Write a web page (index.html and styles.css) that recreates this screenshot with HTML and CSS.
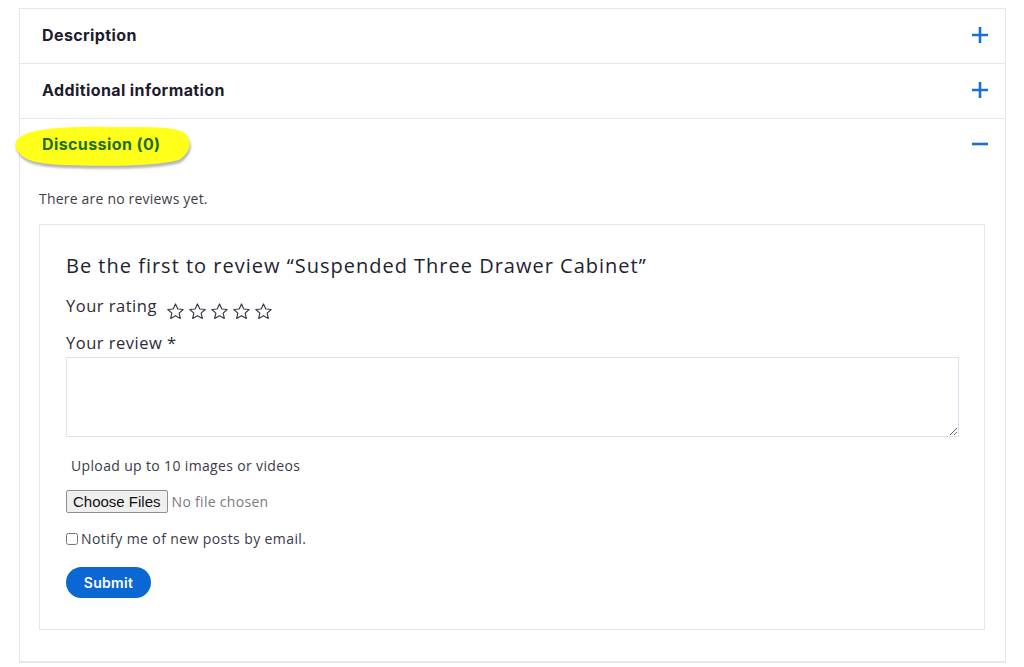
FILE: index.html
```html
<!DOCTYPE html>
<html>
<head>
<meta charset="utf-8">
<link rel="stylesheet" href="styles.css">
</head>
<body>
<div class="accordion">
  <div class="acc-item">
    <div class="acc-head">
      <span class="acc-title">Description</span>
      <svg class="acc-icon" width="18" height="18" viewBox="0 0 18 18"><path d="M1 9h16M9 1v16" stroke="#1a6fd6" stroke-width="2.6" fill="none"/></svg>
    </div>
  </div>
  <div class="acc-item">
    <div class="acc-head">
      <span class="acc-title">Additional information</span>
      <svg class="acc-icon" width="18" height="18" viewBox="0 0 18 18"><path d="M1 9h16M9 1v16" stroke="#1a6fd6" stroke-width="2.6" fill="none"/></svg>
    </div>
  </div>
  <div class="acc-item open">
    <div class="acc-head active">
      <svg class="highlight" width="182" height="46" viewBox="0 0 182 46">
        <defs>
          <filter id="sh" x="-10%" y="-20%" width="120%" height="150%">
            <feGaussianBlur stdDeviation="1.3"/>
          </filter>
        </defs>
        <path d="M6 14 C16 5 50 2 95 3 C135 3 165 2 173 10 C180 18 177 29 166 36 C140 43 90 42 50 41 C28 40 12 37 6 29 C1 23 1 18 6 14 Z" fill="#7a7a7a" opacity="0.55" filter="url(#sh)" transform="translate(1,2)"/>
        <path d="M6 13 C16 4 50 1 95 2 C135 2 165 1 173 9 C180 17 177 28 166 35 C140 42 90 41 50 40 C28 39 12 36 6 28 C1 22 1 17 6 13 Z" fill="#ffff1a"/>
      </svg>
      <span class="acc-title green">Discussion (0)</span>
      <svg class="acc-icon" width="18" height="18" viewBox="0 0 18 18"><path d="M1 9h16" stroke="#1a6fd6" stroke-width="2.6" fill="none"/></svg>
    </div>
    <div class="acc-panel">
      <p class="no-reviews">There are no reviews yet.</p>
      <div class="review-box">
        <h3 class="review-title">Be the first to review “Suspended Three Drawer Cabinet”</h3>
        <div class="rating-row">
          <span class="label">Your rating</span>
          <span class="stars">
            <svg width="19" height="19" viewBox="0 0 24 24"><path d="M12 2.5l2.9 6.3 6.8.7-5.1 4.6 1.5 6.7L12 17.3l-6.1 3.5 1.5-6.7-5.1-4.6 6.8-.7z" fill="none" stroke="#3b3b45" stroke-width="1.5" stroke-linejoin="round"/></svg>
            <svg width="19" height="19" viewBox="0 0 24 24"><path d="M12 2.5l2.9 6.3 6.8.7-5.1 4.6 1.5 6.7L12 17.3l-6.1 3.5 1.5-6.7-5.1-4.6 6.8-.7z" fill="none" stroke="#3b3b45" stroke-width="1.5" stroke-linejoin="round"/></svg>
            <svg width="19" height="19" viewBox="0 0 24 24"><path d="M12 2.5l2.9 6.3 6.8.7-5.1 4.6 1.5 6.7L12 17.3l-6.1 3.5 1.5-6.7-5.1-4.6 6.8-.7z" fill="none" stroke="#3b3b45" stroke-width="1.5" stroke-linejoin="round"/></svg>
            <svg width="19" height="19" viewBox="0 0 24 24"><path d="M12 2.5l2.9 6.3 6.8.7-5.1 4.6 1.5 6.7L12 17.3l-6.1 3.5 1.5-6.7-5.1-4.6 6.8-.7z" fill="none" stroke="#3b3b45" stroke-width="1.5" stroke-linejoin="round"/></svg>
            <svg width="19" height="19" viewBox="0 0 24 24"><path d="M12 2.5l2.9 6.3 6.8.7-5.1 4.6 1.5 6.7L12 17.3l-6.1 3.5 1.5-6.7-5.1-4.6 6.8-.7z" fill="none" stroke="#3b3b45" stroke-width="1.5" stroke-linejoin="round"/></svg>
          </span>
        </div>
        <label class="label review-label">Your review *</label>
        <textarea class="review-text"></textarea>
        <p class="upload-note">Upload up to 10 images or videos</p>
        <div class="file-row">
          <input type="file" multiple class="file-input">
        </div>
        <label class="notify"><input type="checkbox" class="notify-check"> Notify me of new posts by email.</label>
        <button class="submit">Submit</button>
      </div>
    </div>
  </div>
</div>
</body>
</html>
```

FILE: styles.css
```css
* { box-sizing: border-box; }
body {
  margin: 0;
  background: #fff;
  font-family: "Open Sans", "Noto Sans", sans-serif;
  color: #3a3a4a;
}
.accordion {
  margin: 8px 18px 0 19px;
  border: 1px solid #e3e7ef;
  border-bottom-width: 2px;
}
.acc-item { border-bottom: 1px solid #e3e7ef; }
.acc-item.open { border-bottom: none; }
.acc-head {
  position: relative;
  height: 54px;
  display: flex;
  align-items: center;
  justify-content: space-between;
  padding: 0 16px 2px 22px;
}
.acc-head.active { padding-bottom: 4px; }
.acc-title {
  position: relative;
  font-family: "Inter", "Noto Sans", sans-serif;
  font-weight: 700;
  font-size: 16px;
  color: #1c1c2c;
  letter-spacing: 0.4px;
}
.acc-title.green { color: #1d6d0c; }
.acc-icon { position: relative; }
.highlight {
  position: absolute;
  left: -7px;
  top: 6px;
}
.acc-panel {
  padding: 0 20px 31px 19px;
}
.no-reviews {
  margin: 16px 0 15px 0;
  font-size: 14px;
  line-height: 20px;
  letter-spacing: 0.2px;
  color: #3d3d48;
}
.review-box {
  border: 1px solid #e3e7ef;
  padding: 27px 25px 31px 26px;
  display: flex;
  flex-direction: column;
  align-items: flex-start;
}
.review-title {
  margin: 0;
  font-weight: 400;
  font-size: 20px;
  line-height: 28px;
  letter-spacing: 1px;
  color: #23232f;
}
.rating-row {
  display: flex;
  align-items: flex-end;
  margin-top: 15px;
  gap: 9px;
}
.label {
  font-size: 16.5px;
  line-height: 22px;
  letter-spacing: 0.5px;
  color: #2b2b36;
}
.stars { display: flex; gap: 3px; margin-bottom: -4px; }
.review-label { margin-top: 15px; }
.review-text {
  margin-top: 3px;
  width: 100%;
  height: 80px;
  border: 1px solid #dde3ee;
  resize: vertical;
  font-family: inherit;
}
.upload-note {
  margin: 19px 0 0 5px;
  font-size: 14px;
  line-height: 20px;
  letter-spacing: 0.35px;
  color: #3a3a46;
}
.file-row { margin-top: 14px; }
.file-input {
  font-family: "Open Sans", sans-serif;
  font-size: 14px;
  letter-spacing: 0.3px;
  color: #7a7a80;
}
.file-input::file-selector-button {
  font-family: "Liberation Sans", Arial, sans-serif;
  font-size: 15px;
  letter-spacing: 0;
  color: #111;
  padding: 2px 6px;
  margin-right: 4px;
  border: 1px solid #8f8f8f;
  border-radius: 2px;
  background: #efefef;
}
.notify {
  margin-top: 16px;
  display: flex;
  align-items: center;
  gap: 3px;
  font-size: 14px;
  line-height: 20px;
  letter-spacing: 0.4px;
  color: #3a3a46;
}
.notify-check { margin: 0; width: 12px; height: 12px; }
.submit {
  margin-top: 18px;
  width: 85px;
  height: 31px;
  border: none;
  border-radius: 16px;
  background: #0a67d3;
  color: #fff;
  font-family: "Inter", sans-serif;
  font-weight: 600;
  font-size: 14px;
  letter-spacing: 0.3px;
}
```
